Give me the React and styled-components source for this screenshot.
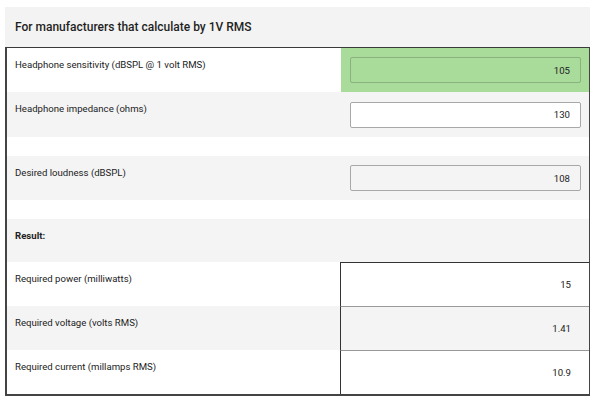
import React from "react";
import styled, { createGlobalStyle } from "styled-components";

const Global = createGlobalStyle`
  html, body { margin: 0; padding: 0; background: #ffffff; }
  body { font-family: Roboto, "Liberation Sans", Arial, sans-serif; color: #222; }
  * { box-sizing: border-box; }
`;

const Page = styled.div`
  padding: 7px 6px 0 5px;
  width: 596px;
`;

const Header = styled.div`
  background: #f3f3f3;
  height: 40px;
  display: flex;
  align-items: center;
  padding-left: 10px;
  font-size: 12px;
  font-weight: 500;
  color: #1f1f1f;
`;

const Table = styled.div`
  width: 585px;
  border-top: 1px solid #3a3a3a;
  border-left: 2px solid #444;
  border-right: 1px solid #444;
  border-bottom: 2px solid #444;
  display: flex;
  flex-direction: column;
`;

const Row = styled.div`
  display: grid;
  grid-template-columns: 1fr 248px;
  height: ${(p) => p.$h}px;
  background: ${(p) => (p.$shade ? "#f4f4f4" : "#ffffff")};
`;

const Label = styled.div`
  padding: 10px 8px 0 8px;
  font-size: 9.6px;
  line-height: 14px;
  font-weight: ${(p) => (p.$bold ? 700 : 400)};
  color: #222;
`;

const InputCell = styled.div`
  background: ${(p) => (p.$active ? "#a9dc9b" : "transparent")};
  padding: 0 8px 0 9px;
  display: flex;
  align-items: center;
`;

const Field = styled.input`
  width: 100%;
  height: 26px;
  border: 1px solid ${(p) => (p.$active ? "#8ab27e" : "#a8a8a8")};
  border-radius: 2px;
  background: ${(p) => (p.$active ? "#a9dc9b" : p.$bg)};
  text-align: right;
  padding: 0 10px 0 6px;
  font-family: Roboto, "Liberation Sans", Arial, sans-serif;
  font-size: 9.6px;
  color: #222;
  outline: none;
`;

const ResultCell = styled.div`
  border-left: 1px solid #333;
  border-top: 1px solid ${(p) => (p.$first ? "#333" : "#999")};
  margin-left: -1px;
  display: flex;
  align-items: center;
  justify-content: flex-end;
  padding-right: 18px;
  font-size: 9.6px;
  color: #222;
  background: ${(p) => (p.$shade ? "#f4f4f4" : "#ffffff")};
`;

export default function App() {
  return (
    <>
      <Global />
      <Page>
        <Header>For manufacturers that calculate by 1V RMS</Header>
        <Table>
          <Row $h={44}>
            <Label>Headphone sensitivity (dBSPL @ 1 volt RMS)</Label>
            <InputCell $active>
              <Field $active defaultValue="105" />
            </InputCell>
          </Row>
          <Row $h={45} $shade>
            <Label>Headphone impedance (ohms)</Label>
            <InputCell>
              <Field $bg="#ffffff" defaultValue="130" />
            </InputCell>
          </Row>
          <Row $h={19} />
          <Row $h={44} $shade>
            <Label>Desired loudness (dBSPL)</Label>
            <InputCell>
              <Field $bg="#f4f4f4" defaultValue="108" />
            </InputCell>
          </Row>
          <Row $h={19} />
          <Row $h={43} $shade>
            <Label $bold>Result:</Label>
            <div />
          </Row>
          <Row $h={44}>
            <Label>Required power (milliwatts)</Label>
            <ResultCell $first>15</ResultCell>
          </Row>
          <Row $h={44} $shade>
            <Label>Required voltage (volts RMS)</Label>
            <ResultCell $shade>1.41</ResultCell>
          </Row>
          <Row $h={44}>
            <Label>Required current (millamps RMS)</Label>
            <ResultCell>10.9</ResultCell>
          </Row>
        </Table>
      </Page>
    </>
  );
}
